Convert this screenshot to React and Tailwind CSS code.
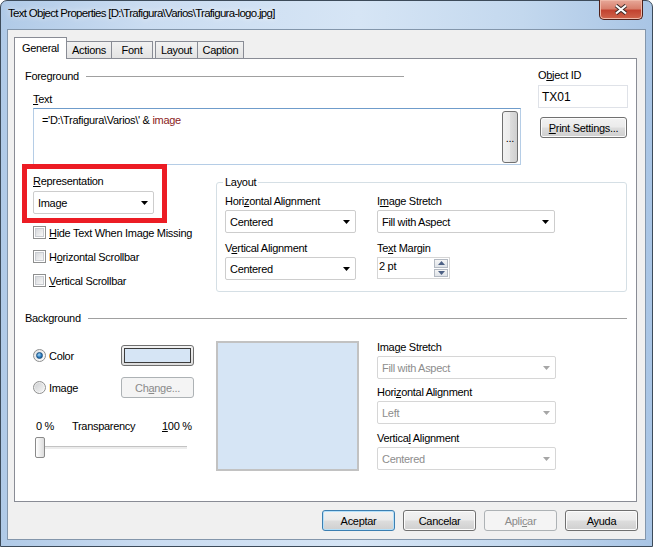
import React from "react";

const U = ({ children }) => (
  <span className="underline decoration-1 underline-offset-[1px]">{children}</span>
);

function Arrow({ disabled }) {
  return (
    <svg width="7" height="4" viewBox="0 0 7 4">
      <polygon points="0,0 7,0 3.5,4" fill={disabled ? "#a6a6a6" : "#000"} />
    </svg>
  );
}

function Combo({ value, className = "", disabled }) {
  return (
    <div
      className={`flex h-[23px] items-center justify-between rounded-[2px] border bg-white pl-[4px] pr-[5px] ${
        disabled ? "border-[#d6d6d6] text-[#8d8d8d]" : "border-[#cdcdcd] text-black"
      } ${className}`}
    >
      <span>{value}</span>
      <Arrow disabled={disabled} />
    </div>
  );
}

function Button({ children, className = "", disabled, focused }) {
  let look =
    "border-[#707070] bg-[linear-gradient(#f2f2f2_0%,#ebebeb_48%,#dddddd_52%,#cfcfcf_100%)] shadow-[inset_0_0_0_1px_#fcfcfc]";
  if (disabled) look = "border-[#adb2b5] bg-[#f4f4f4] text-[#8a8a8a]";
  if (focused)
    look =
      "border-[#3c7fb1] bg-[linear-gradient(#f2f2f2_0%,#ebebeb_48%,#dddddd_52%,#cfcfcf_100%)] shadow-[inset_0_0_0_1px_#b5e0fa]";
  return (
    <div className={`flex items-center justify-center rounded-[3px] border ${look} ${className}`}>
      {children}
    </div>
  );
}

function Checkbox({ children }) {
  return (
    <div className="flex h-[13px] items-center whitespace-nowrap">
      <div className="flex h-[13px] w-[13px] shrink-0 items-center justify-center border border-[#8e8f8f] bg-white">
        <div className="h-[9px] w-[9px] border border-[#c9ccd1] bg-[linear-gradient(135deg,#d7d9dc,#f7f7f7)]" />
      </div>
      <span className="ml-[3px]">{children}</span>
    </div>
  );
}

function Radio({ checked }) {
  return (
    <div className="flex h-[13px] w-[13px] items-center justify-center rounded-full border border-[#8e8f8f] bg-[linear-gradient(135deg,#e3e3e3,#ffffff)]">
      {checked ? (
        <div className="h-[7px] w-[7px] rounded-full border border-[#1d5281] bg-[radial-gradient(circle_at_40%_35%,#a5d8f6_0%,#2c7bbf_55%,#0f4a7d_100%)]" />
      ) : (
        <div className="h-[9px] w-[9px] rounded-full bg-[linear-gradient(135deg,#cfd1d3,#f4f4f4)]" />
      )}
    </div>
  );
}

function SectionHeader({ title, lineClass }) {
  return (
    <div className="flex items-center">
      <span>{title}</span>
      <div className={`h-px bg-[#a0a0a0] ${lineClass}`} />
    </div>
  );
}

export default function App() {
  return (
    <div className="h-[547px] w-[653px] font-['Liberation_Sans',Arial,sans-serif] text-[11px] leading-[14px] tracking-[-0.3px] text-black">
      <div className="flex h-full flex-col rounded-t-[7px] border border-[#3d4b5a] bg-[linear-gradient(90deg,#b0cae7_0%,#cadcf1_22%,#d6e5f5_55%,#c3d8ee_80%,#a9c5e5_100%)]">
        {/* title bar */}
        <div className="flex h-[28px] shrink-0 items-start">
          <span className="whitespace-nowrap pl-[7px] pt-[5px] text-[11.5px] tracking-[-0.7px] [text-shadow:0_0_6px_#ffffff]">
            Text Object Properties [D:\Trafigura\Varios\Trafigura-logo.jpg]
          </span>
          <div className="ml-auto mr-[9px] -mt-px flex h-[20px] w-[44px] items-center justify-center rounded-b-[5px] border border-t-0 border-[#4f2019] bg-[linear-gradient(#e7a899_0%,#d8806d_45%,#c24330_55%,#d0654c_100%)] shadow-[inset_0_0_0_1px_#efb8a8]">
            <svg width="14" height="11" viewBox="0 0 14 11">
              <path d="M2 1.5 L12 9.5 M12 1.5 L2 9.5" stroke="#3a2a28" strokeWidth="4" />
              <path d="M2 1.5 L12 9.5 M12 1.5 L2 9.5" stroke="#ffffff" strokeWidth="2.2" />
            </svg>
          </div>
        </div>

        {/* client area */}
        <div className="mx-[6px] mb-[6px] flex flex-1 flex-col border border-[#8396ab] bg-[#f0f0f0] pl-[6px] pr-[7px] pt-[7px]">
          {/* tabs */}
          <div className="flex h-[21px] items-end">
            <div className="relative z-10 -mb-px flex h-[22px] w-[53px] items-center justify-center border border-b-0 border-[#898c95] bg-white pb-[1px]">
              General
            </div>
            <div className="flex h-[17px] w-[45px] items-center justify-center border border-l-0 border-b-0 border-[#898c95] bg-[linear-gradient(#f2f2f2,#e3e3e3)]">
              Actions
            </div>
            <div className="flex h-[17px] w-[41px] items-center justify-center border border-l-0 border-b-0 border-[#898c95] bg-[linear-gradient(#f2f2f2,#e3e3e3)]">
              Font
            </div>
            <div className="ml-[2px] flex h-[17px] w-[43px] items-center justify-center border border-b-0 border-[#898c95] bg-[linear-gradient(#f2f2f2,#e3e3e3)]">
              Layout
            </div>
            <div className="flex h-[17px] w-[46px] items-center justify-center border border-l-0 border-b-0 border-[#898c95] bg-[linear-gradient(#f2f2f2,#e3e3e3)]">
              Caption
            </div>
          </div>

          {/* tab panel */}
          <div className="flex h-[444px] w-[623px] flex-col border border-[#898c95] bg-white">
            {/* Foreground */}
            <div className="flex">
              <div className="ml-[10px] flex w-[495px] flex-col">
                <div className="mt-[10px]">
                  <SectionHeader title="Foreground" lineClass="ml-[7px] w-[318px]" />
                </div>
                <div className="ml-[8px] mt-[9px]">
                  <U>T</U>ext
                </div>
                <div className="ml-[8px] mt-[2px] flex h-[57px] w-[488px] border border-[#b5cde6] border-t-[#6f9ccb] bg-white pb-[1px] pr-[2px] pt-[2px]">
                  <div className="flex-1 pl-[8px] pt-[2px]">
                    ='D:\Trafigura\Varios\' &amp; <span className="text-[#8b1c1c]">image</span>
                  </div>
                  <div className="flex w-[16px] items-center justify-center rounded-[3px] border border-[#707070] bg-[linear-gradient(90deg,#f2f2f2_0%,#ebebeb_48%,#dddddd_52%,#cfcfcf_100%)] pt-[2px]">
                    ...
                  </div>
                </div>
              </div>

              <div className="ml-[18px] flex flex-col">
                <div className="mt-[9px]">
                  O<U>b</U>ject ID
                </div>
                <div className="mt-[3px] flex h-[23px] w-[90px] items-center border border-[#dfe2e8] bg-white pl-[3px] text-[12px] tracking-normal">
                  TX01
                </div>
                <Button className="ml-[2px] mt-[9px] h-[21px] w-[87px]">
                  <U>P</U>rint Settings...
                </Button>
              </div>
            </div>

            {/* Representation + Layout */}
            <div className="flex items-start">
              <div className="ml-[7px] -mt-px flex w-[145px] shrink-0 flex-col">
                <div className="flex h-[59px] w-[145px] flex-col border-[5px] border-[#ec1c24] pl-[6px] pt-[5px]">
                  <div>
                    <U>R</U>epresentation
                  </div>
                  <Combo value="Image" className="mt-[3px] w-[121px]" />
                </div>
                <div className="ml-[11px] mt-[3px] flex flex-col">
                  <Checkbox>
                    <U>H</U>ide Text When Image Missing
                  </Checkbox>
                  <div className="mt-[11px]">
                    <Checkbox>
                      H<U>o</U>rizontal Scrollbar
                    </Checkbox>
                  </div>
                  <div className="mt-[11px]">
                    <Checkbox>
                      <U>V</U>ertical Scrollbar
                    </Checkbox>
                  </div>
                </div>
              </div>

              <div className="ml-[49px] mt-[17px] flex h-[110px] w-[411px] flex-col rounded-[3px] border border-[#d5dfe5] pb-[10px] pl-[8px]">
                <div className="-ml-[2px] -mt-[8px] self-start bg-white px-[2px]">Layout</div>
                <div className="mt-[5px] grid grid-cols-[131px_178px] gap-x-[21px]">
                  <div>
                    Hori<U>z</U>ontal Alignment
                  </div>
                  <div>
                    I<U>m</U>age Stretch
                  </div>
                  <Combo value="Centered" className="mt-[2px]" />
                  <Combo value="Fill with Aspect" className="mt-[2px]" />
                  <div className="mt-[8px]">
                    V<U>e</U>rtical Alignment
                  </div>
                  <div className="mt-[8px]">
                    Te<U>x</U>t Margin
                  </div>
                  <Combo value="Centered" className="mt-[2px]" />
                  <div className="mt-[2px] flex h-[22px] w-[73px] border border-[#d5d5d5] bg-white">
                    <div className="flex-1 pl-[1px] pt-[1px]">2 pt</div>
                    <div className="flex w-[16px] flex-col gap-px p-px">
                      <div className="flex flex-1 items-center justify-center border border-[#b3b9c2] bg-[linear-gradient(#f5f5f5,#dfe3e8)]">
                        <svg width="7" height="4" viewBox="0 0 7 4">
                          <polygon points="3.5,0 7,4 0,4" fill="#4d6185" />
                        </svg>
                      </div>
                      <div className="flex flex-1 items-center justify-center border border-[#b3b9c2] bg-[linear-gradient(#f5f5f5,#dfe3e8)]">
                        <svg width="7" height="4" viewBox="0 0 7 4">
                          <polygon points="0,0 7,0 3.5,4" fill="#4d6185" />
                        </svg>
                      </div>
                    </div>
                  </div>
                </div>
              </div>
            </div>

            {/* Background */}
            <div className="ml-[10px] mt-[19px]">
              <SectionHeader title="Background" lineClass="ml-[7px] mr-[9px] flex-1" />
            </div>

            <div className="flex items-start">
              <div className="ml-[18px] flex w-[161px] flex-col">
                <div className="mt-[20px] flex h-[21px] items-center">
                  <div className="flex w-[88px] items-center">
                    <Radio checked />
                    <span className="ml-[3px]">Color</span>
                  </div>
                  <div className="flex h-[21px] w-[73px] items-center justify-center rounded-[3px] border border-[#707070] bg-[linear-gradient(#f2f2f2,#dcdcdc)]">
                    <div className="h-[15px] w-[67px] border border-[#3c3c3c] bg-[#d6e5f5]" />
                  </div>
                </div>
                <div className="mt-[11px] flex h-[21px] items-center">
                  <div className="flex w-[88px] items-center">
                    <Radio />
                    <span className="ml-[3px]">Image</span>
                  </div>
                  <Button disabled className="h-[21px] w-[73px]">
                    Ch<U>a</U>nge...
                  </Button>
                </div>
                <div className="mt-[21px] flex">
                  <span className="w-[39px] pl-[3px]">0 %</span>
                  <span className="w-[90px]">Transparency</span>
                  <span>
                    <U>1</U>00 %
                  </span>
                </div>
                <div className="relative mt-[4px] h-[21px] w-[154px]">
                  <div className="absolute left-[2px] right-0 top-[9px] h-[3px] border-t border-[#c3c3c3] bg-[#ececec]" />
                  <div className="relative ml-[2px] h-[21px] w-[10px] rounded-[2px] border border-[#8a8a8a] bg-[linear-gradient(90deg,#ffffff,#dcdcdc)]" />
                </div>
              </div>

              <div className="ml-[22px] mt-[16px] h-[130px] w-[143px] border-[2px] border-[#c2c2c2] bg-[#d6e5f5]" />

              <div className="ml-[18px] flex w-[179px] flex-col">
                <div className="mt-[15px]">
                  Ima<U>g</U>e Stretch
                </div>
                <Combo disabled value="Fill with Aspect" className="mt-[2px]" />
                <div className="mt-[6px]">
                  Hori<U>z</U>ontal Alignment
                </div>
                <Combo disabled value="Left" className="mt-[2px]" />
                <div className="mt-[7px]">
                  Vertica<U>l</U> Alignment
                </div>
                <Combo disabled value="Centered" className="mt-[2px]" />
              </div>
            </div>
          </div>

          {/* dialog buttons */}
          <div className="mt-[8px] flex justify-end gap-[8px]">
            <Button focused className="h-[21px] w-[73px]">
              Aceptar
            </Button>
            <Button className="h-[21px] w-[73px]">Cancelar</Button>
            <Button disabled className="h-[21px] w-[73px]">
              Apli<U>c</U>ar
            </Button>
            <Button className="h-[21px] w-[73px]">Ayuda</Button>
          </div>
        </div>
      </div>
    </div>
  );
}
